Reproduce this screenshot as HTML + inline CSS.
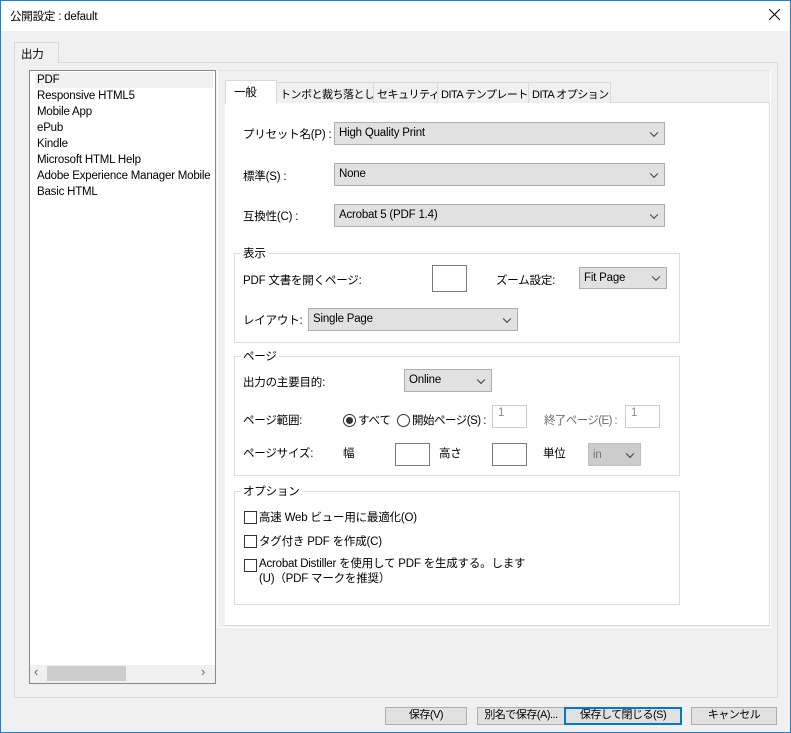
<!DOCTYPE html>
<html><head><meta charset="utf-8"><style>
*{box-sizing:border-box;margin:0;padding:0}
body{width:791px;height:733px;background:#f0f0f0;font-family:"Liberation Sans","Noto Sans CJK JP",sans-serif;font-size:11.5px;letter-spacing:-0.2px;color:#000;position:relative;overflow:hidden}
.a{position:absolute;white-space:nowrap}
.win{position:absolute;left:0;top:0;width:791px;height:733px;border:1px solid #1883d7}
.sel{position:absolute;background:#e1e1e1;border:1px solid #adadad;padding:4px 0 0 4px;white-space:nowrap}
.sel:after{content:"";position:absolute;right:7px;top:50%;width:5px;height:5px;border-right:1px solid #333;border-bottom:1px solid #333;transform:translateY(-70%) rotate(45deg)}
.inp{position:absolute;background:#fff;border:1px solid #7a7a7a}
.grp{position:absolute;border:1px solid #dcdcdc}
.lg{position:absolute;background:#fff;padding:0 2px;top:-9px;left:6px;white-space:nowrap}
.cb{position:absolute;width:13px;height:13px;border:1px solid #333;background:#fff}
.btn{position:absolute;top:707px;height:18px;background:#e1e1e1;border:1px solid #adadad;text-align:center;line-height:15px;white-space:nowrap;font-size:11px;letter-spacing:-0.5px}
.tab{position:absolute;top:82px;height:21px;border:1px solid #d9d9d9;border-bottom:none;background:#f0f0f0;padding:3px 0 0 3px;white-space:nowrap;font-size:11px;letter-spacing:-0.5px;overflow:hidden}
</style></head><body>
<div class="win"></div>
<div class="a" style="left:1px;top:1px;width:789px;height:30px;background:#fff"></div>
<div class="a" style="left:10px;top:8px">公開設定 : default</div>
<svg class="a" style="left:769px;top:9px" width="11" height="11"><path d="M0 0L11 11M11 0L0 11" stroke="#000" stroke-width="1"/></svg>

<div class="a" style="left:14px;top:62px;width:764px;height:636px;border:1px solid #d9d9d9;background:#f0f0f0"></div>
<div class="a" style="left:14px;top:42px;width:45px;height:21px;border:1px solid #d9d9d9;border-bottom:none;background:#f0f0f0;padding:3px 0 0 6px">出力</div>

<div class="a" style="left:29px;top:70px;width:187px;height:614px;background:#fff;border:1px solid #828790"></div>
<div class="a" style="left:35px;top:72px;width:178px;height:16px;background:#f0f0f0"></div>
<div class="a" style="left:37px;top:72px;line-height:16px;letter-spacing:-0.2px">PDF<br>Responsive HTML5<br>Mobile App<br>ePub<br>Kindle<br>Microsoft HTML Help<br>Adobe Experience Manager Mobile<br>Basic HTML</div>
<div class="a" style="left:30px;top:665px;width:185px;height:18px;background:#f0f0f0"></div>
<div class="a" style="left:47px;top:666px;width:79px;height:15px;background:#cdcdcd"></div>
<div class="a" style="left:34px;top:664px;color:#666;font-size:13px">‹</div>
<div class="a" style="left:201px;top:664px;color:#666;font-size:13px">›</div>

<div class="a" style="left:217px;top:70px;width:554px;height:558px;border:1px solid #fff;border-top:1px solid #e3e3e3"></div>
<div class="a" style="left:225px;top:103px;width:545px;height:523px;background:#fff;border-right:1px solid #d9d9d9;border-bottom:1px solid #d9d9d9"></div>
<div class="a" style="left:225px;top:102px;width:545px;height:1px;background:#d9d9d9"></div>
<div class="tab" style="left:276px;width:98px">トンボと裁ち落とし</div>
<div class="tab" style="left:373px;width:65px">セキュリティ</div>
<div class="tab" style="left:437px;width:92px">DITA テンプレート</div>
<div class="tab" style="left:528px;width:83px">DITA オプション</div>
<div class="a" style="left:225px;top:80px;width:52px;height:24px;background:#fff;border:1px solid #d9d9d9;border-bottom:none;padding:3px 0 0 8px">一般</div>

<div class="a" style="left:243px;top:126px">プリセット名(P) :</div>
<div class="sel" style="left:334px;top:122px;width:331px;height:23px">High Quality Print</div>
<div class="a" style="left:243px;top:168px">標準(S) :</div>
<div class="sel" style="left:334px;top:163px;width:331px;height:23px">None</div>
<div class="a" style="left:243px;top:208px">互換性(C) :</div>
<div class="sel" style="left:334px;top:204px;width:331px;height:23px">Acrobat 5 (PDF 1.4)</div>

<div class="grp" style="left:234px;top:253px;width:446px;height:90px"><span class="lg">表示</span></div>
<div class="a" style="left:243px;top:272px">PDF 文書を開くページ:</div>
<div class="inp" style="left:432px;top:265px;width:35px;height:27px"></div>
<div class="a" style="left:496px;top:272px">ズーム設定:</div>
<div class="sel" style="left:579px;top:267px;width:88px;height:22px">Fit Page</div>
<div class="a" style="left:243px;top:312px">レイアウト:</div>
<div class="sel" style="left:308px;top:308px;width:210px;height:23px">Single Page</div>

<div class="grp" style="left:234px;top:356px;width:446px;height:120px"><span class="lg">ページ</span></div>
<div class="a" style="left:243px;top:374px">出力の主要目的:</div>
<div class="sel" style="left:404px;top:369px;width:88px;height:23px">Online</div>
<div class="a" style="left:243px;top:412px">ページ範囲:</div>
<div class="a" style="left:343px;top:414px;width:13px;height:13px;border:1px solid #333;border-radius:50%;background:#fff"><div style="margin:2px;width:7px;height:7px;border-radius:50%;background:#333"></div></div>
<div class="a" style="left:358px;top:412px">すべて</div>
<div class="a" style="left:397px;top:414px;width:13px;height:13px;border:1px solid #333;border-radius:50%;background:#fff"></div>
<div class="a" style="left:412px;top:412px;letter-spacing:-0.5px">開始ページ(S) :</div>
<div class="inp" style="left:492px;top:405px;width:35px;height:23px;border-color:#ccc;color:#888;padding:1px 0 0 5px">1</div>
<div class="a" style="left:544px;top:412px;color:#6d6d6d;letter-spacing:-0.6px">終了ページ(E) :</div>
<div class="inp" style="left:625px;top:405px;width:35px;height:23px;border-color:#ccc;color:#888;padding:1px 0 0 5px">1</div>
<div class="a" style="left:243px;top:445px">ページサイズ:</div>
<div class="a" style="left:343px;top:445px">幅</div>
<div class="inp" style="left:395px;top:443px;width:35px;height:23px"></div>
<div class="a" style="left:439px;top:445px">高さ</div>
<div class="inp" style="left:492px;top:443px;width:35px;height:23px"></div>
<div class="a" style="left:543px;top:445px">単位</div>
<div class="sel" style="left:588px;top:443px;width:53px;height:23px;background:#ccc;border-color:#bfbfbf;color:#777;padding-top:5px">in</div>

<div class="grp" style="left:234px;top:491px;width:446px;height:114px"><span class="lg">オプション</span></div>
<div class="cb" style="left:244px;top:511px"></div>
<div class="a" style="left:259px;top:509px">高速 Web ビュー用に最適化(O)</div>
<div class="cb" style="left:244px;top:535px"></div>
<div class="a" style="left:259px;top:533px">タグ付き PDF を作成(C)</div>
<div class="cb" style="left:244px;top:559px"></div>
<div class="a" style="left:259px;top:557px;line-height:15px">Acrobat Distiller を使用して PDF を生成する。します<br>(U)（PDF マークを推奨）</div>

<div class="btn" style="left:385px;width:82px">保存(V)</div>
<div class="btn" style="left:477px;width:88px">別名で保存(A)...</div>
<div class="btn" style="left:564px;width:118px;border:2px solid #0078d7;line-height:13px">保存して閉じる(S)</div>
<div class="btn" style="left:691px;width:86px">キャンセル</div>
</body></html>
